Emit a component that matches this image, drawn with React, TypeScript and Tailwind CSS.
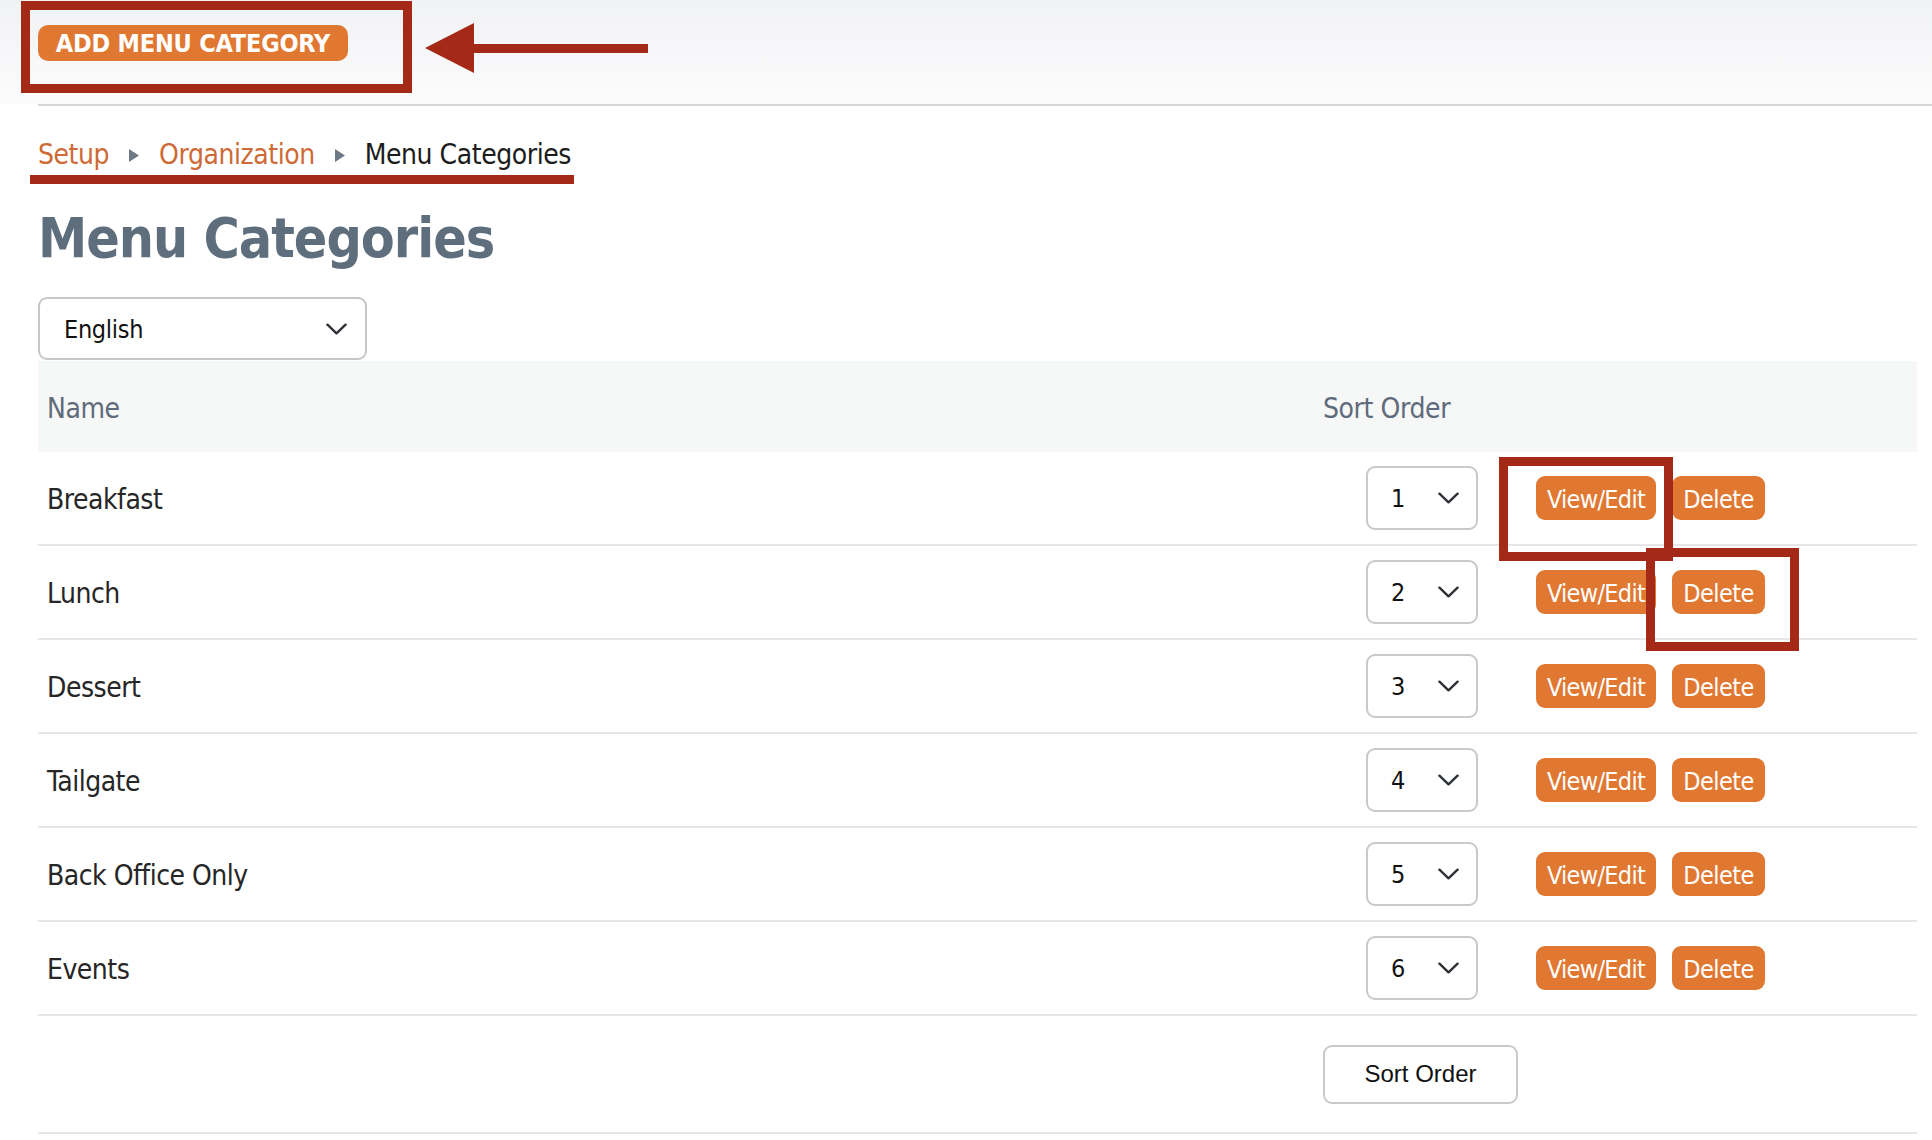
import React from "react";

const rows = ["Breakfast", "Lunch", "Dessert", "Tailgate", "Back Office Only", "Events"];

function Chevron({ className }: { className?: string }) {
  return (
    <svg className={className} viewBox="0 0 22 12" fill="none">
      <polyline points="1.5,1.5 11,10.5 20.5,1.5" stroke="#2f3338" strokeWidth="2.6" strokeLinecap="round" strokeLinejoin="round" />
    </svg>
  );
}

function Tri() {
  return (
    <svg width="10" height="13" viewBox="0 0 10 13" className="mt-[1px]">
      <polygon points="0,0 10,6.5 0,13" fill="#6e7987" />
    </svg>
  );
}

export default function App() {
  const body = "font-['DejaVu_Sans_Condensed','DejaVu_Sans',sans-serif]";
  return (
    <div className={`relative w-[1932px] h-[1140px] bg-white overflow-hidden ${body}`}>
      {/* header */}
      <div className="h-[104px] bg-gradient-to-b from-[#f1f2f4] to-[#fcfcfd] pt-[25px] pl-[38px]">
        <button className="h-[36px] w-[310px] rounded-[10px] bg-[#e07832] text-white font-bold text-[25px] leading-[36px] tracking-[-0.2px] pt-[1px]">
          ADD MENU CATEGORY
        </button>
      </div>
      <div className="ml-[38px] h-[2px] bg-[#d4d5d7]" />

      <div className="pl-[38px]">
        {/* breadcrumb */}
        <div className="mt-[32px] flex items-center gap-[20px] text-[28px] leading-[34px] tracking-[-0.45px]">
          <span className="text-[#cd6a35]">Setup</span>
          <Tri />
          <span className="text-[#cd6a35]">Organization</span>
          <Tri />
          <span className="text-[#1c1c1c]">Menu Categories</span>
        </div>

        {/* title */}
        <h1 className="mt-[34px] text-[55px] leading-[64px] font-bold text-[#5f6e7d] tracking-[-1px]">
          Menu Categories
        </h1>

        {/* language select */}
        <div className="mt-[27px] w-[329px] h-[63px] rounded-[9px] border-2 border-[#c7c7c7] bg-white flex items-center justify-between pl-[24px] pr-[18px]">
          <span className="text-[25px] text-[#111] tracking-[-0.3px] pt-[2px]">English</span>
          <Chevron className="w-[21px] h-[12px]" />
        </div>

        {/* table */}
        <div className="mt-[1px] w-[1879px]">
          <div className="h-[91px] bg-[#f6f7f7] flex items-center text-[28px] text-[#5f6b7a] tracking-[-0.4px] pt-[4px]">
            <div className="w-[1285px] pl-[9px]">Name</div>
            <div>Sort Order</div>
          </div>
          {rows.map((name, i) => (
            <div key={name} className="h-[94px] border-b-2 border-[#e6e6e6] flex items-center">
              <div className="w-[1285px] pl-[9px] pt-[4px] text-[28px] text-[#262626] tracking-[-0.5px]">{name}</div>
              <div className="w-[213px] pl-[43px]">
                <div className="w-[112px] h-[64px] rounded-[9px] border-2 border-[#c9c9c9] bg-white flex items-center justify-between pl-[23px] pr-[17px]">
                  <span className="text-[25px] text-[#111] pt-[2px]">{i + 1}</span>
                  <Chevron className="w-[21px] h-[12px]" />
                </div>
              </div>
              <div className="flex items-center gap-[16px]">
                <button className="h-[44px] w-[120px] rounded-[9px] bg-[#e07832] text-white text-[25px] tracking-[-0.7px] leading-[44px] pt-[2px]">
                  View/Edit
                </button>
                <button className="h-[44px] w-[93px] rounded-[9px] bg-[#e07832] text-white text-[25px] tracking-[-0.6px] leading-[44px] pt-[2px]">
                  Delete
                </button>
              </div>
            </div>
          ))}
          <div className="h-[118px] border-b-2 border-[#e6e6e6] flex items-center">
            <div className="w-[1285px]" />
            <button className="h-[59px] w-[195px] rounded-[9px] border-2 border-[#c9c9c9] bg-white text-[24px] text-[#111] font-['Liberation_Sans','Arial',sans-serif]">
              Sort Order
            </button>
          </div>
        </div>
      </div>

      {/* annotations */}
      <div className="absolute left-[21px] top-[1px] w-[391px] h-[92px] border-[9px] border-[#a42a17]" />
      <svg className="absolute left-[420px] top-[18px]" width="232" height="60" viewBox="0 0 232 60">
        <polygon points="5,30 54,5 54,55" fill="#a42a17" />
        <rect x="52" y="26" width="176" height="9" fill="#a42a17" />
      </svg>
      <div className="absolute left-[30px] top-[175px] w-[544px] h-[9px] bg-[#a42a17]" />
      <div className="absolute left-[1499px] top-[457px] w-[174px] h-[104px] border-[9px] border-[#a42a17]" />
      <div className="absolute left-[1646px] top-[548px] w-[153px] h-[103px] border-[9px] border-[#a42a17]" />
    </div>
  );
}
